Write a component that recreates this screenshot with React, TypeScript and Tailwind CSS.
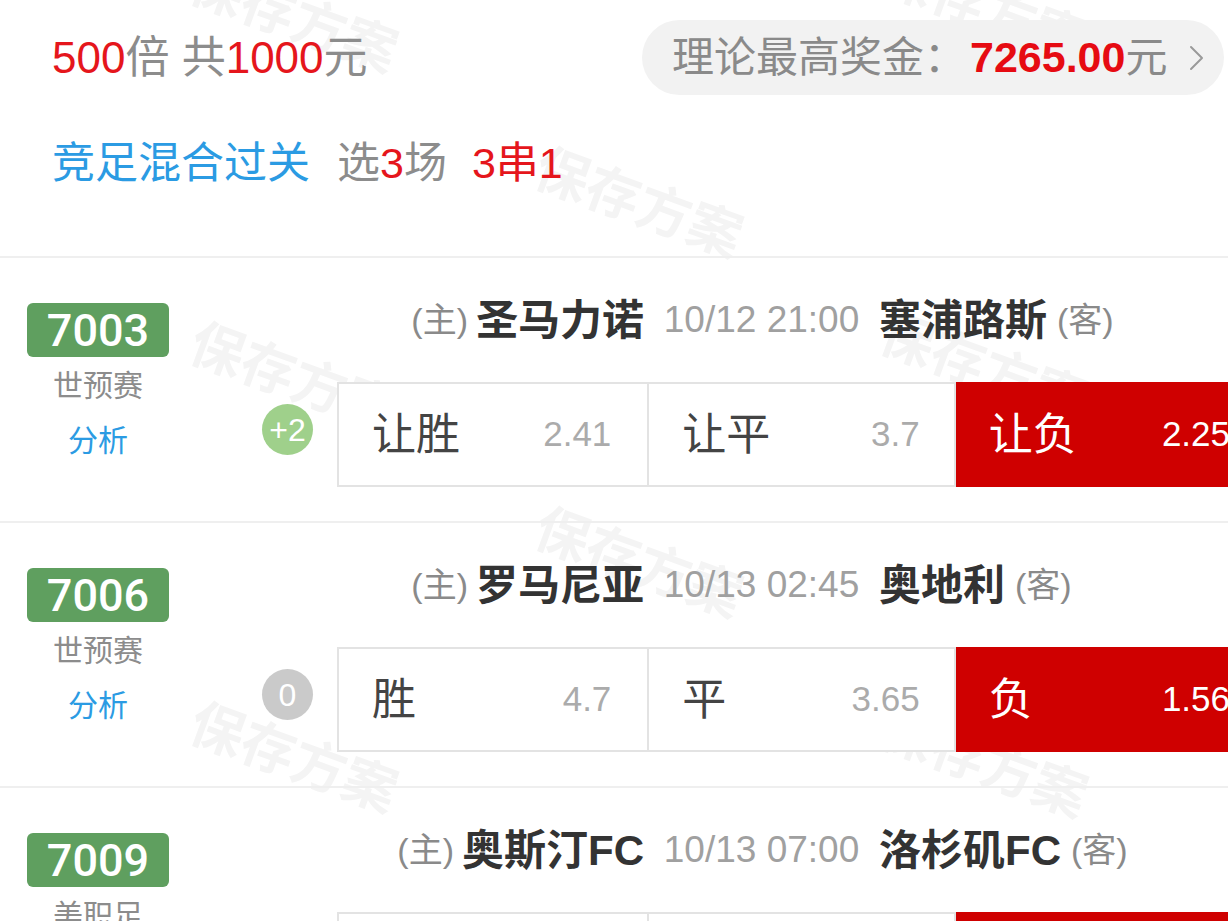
import React from 'react';

type Odd = { label: string; value: string; picked?: boolean };
type Match = {
  code: string;
  league: string;
  home: string;
  away: string;
  time: string;
  handicap: string;
  handicapColor: string;
  odds: Odd[];
};

const matches: Match[] = [
  {
    code: '7003',
    league: '世预赛',
    home: '圣马力诺',
    away: '塞浦路斯',
    time: '10/12 21:00',
    handicap: '+2',
    handicapColor: 'bg-[#9fd08b]',
    odds: [
      { label: '让胜', value: '2.41' },
      { label: '让平', value: '3.7' },
      { label: '让负', value: '2.25', picked: true },
    ],
  },
  {
    code: '7006',
    league: '世预赛',
    home: '罗马尼亚',
    away: '奥地利',
    time: '10/13 02:45',
    handicap: '0',
    handicapColor: 'bg-[#cacaca]',
    odds: [
      { label: '胜', value: '4.7' },
      { label: '平', value: '3.65' },
      { label: '负', value: '1.56', picked: true },
    ],
  },
  {
    code: '7009',
    league: '美职足',
    home: '奥斯汀FC',
    away: '洛杉矶FC',
    time: '10/13 07:00',
    handicap: '-1',
    handicapColor: 'bg-[#9fd08b]',
    odds: [
      { label: '让胜', value: '2.10' },
      { label: '让平', value: '3.40' },
      { label: '让负', value: '2.85', picked: true },
    ],
  },
];

// faint "保存方案" stamps behind the content
const marks = [
  { left: 'left-[185px]', top: 'top-[-5px]' },
  { left: 'left-[875px]', top: 'top-[-15px]' },
  { left: 'left-[530px]', top: 'top-[180px]' },
  { left: 'left-[185px]', top: 'top-[355px]' },
  { left: 'left-[875px]', top: 'top-[345px]' },
  { left: 'left-[530px]', top: 'top-[540px]' },
  { left: 'left-[185px]', top: 'top-[735px]' },
  { left: 'left-[875px]', top: 'top-[740px]' },
];

function MatchRow({ m }: { m: Match }) {
  return (
    <div className="flex h-[265px] border-b-2 border-[#efefef]">
      {/* left column */}
      <div className="w-[196px] flex flex-col items-center pt-[45px]">
        <div className="w-[142px] h-[54px] rounded-[6px] bg-[#5f9f5f] flex items-center justify-center text-white text-[45px] leading-none font-['Roboto',sans-serif] font-medium">
          {m.code}
        </div>
        <div className="mt-[9px] h-[40px] leading-[40px] text-[30px] text-[#8c8c8c]">{m.league}</div>
        <div className="mt-[15px] h-[40px] leading-[40px] text-[30px] text-[#2b9be3]">分析</div>
      </div>

      {/* right area */}
      <div className="flex-1 flex flex-col">
        <div className="mt-[40px] h-[44px] pl-[61px] flex items-center">
          <div className="flex-1 flex items-center justify-end whitespace-nowrap">
            <span className="text-[34px] text-[#8a8a8a]">(主)</span>
            <span className="ml-[8px] text-[42px] font-bold text-[#333]">{m.home}</span>
          </div>
          <div className="w-[235px] text-center text-[37px] text-[#a0a0a0] whitespace-nowrap">{m.time}</div>
          <div className="flex-1 flex items-center whitespace-nowrap">
            <span className="text-[42px] font-bold text-[#333]">{m.away}</span>
            <span className="ml-[10px] text-[34px] text-[#8a8a8a]">(客)</span>
          </div>
        </div>

        <div className="mt-[40px] flex items-start">
          <div
            className={`ml-[66px] mt-[22px] w-[51px] h-[51px] rounded-full ${m.handicapColor} flex items-center justify-center text-white text-[32px] leading-none`}
          >
            {m.handicap}
          </div>
          <div className="ml-[24px] flex-1 h-[105px] grid grid-cols-3 border-2 border-[#e3e3e3] bg-white">
            {m.odds.map((o, i) => (
              <div
                key={i}
                className={`flex items-center justify-between pl-[33px] pr-[36px] ${
                  i > 0 ? 'border-l-2 border-[#e3e3e3]' : ''
                } ${o.picked ? 'bg-[#cf0000] -my-[2px] -mr-[2px] -ml-[2px]' : ''}`}
              >
                <span className={`text-[44px] ${o.picked ? 'text-white' : 'text-[#444]'}`}>{o.label}</span>
                <span className={`text-[35px] ${o.picked ? 'text-white' : 'text-[#ababab]'}`}>{o.value}</span>
              </div>
            ))}
          </div>
        </div>
      </div>
    </div>
  );
}

export default function App() {
  return (
    <div className="w-[1228px] h-[921px] overflow-hidden bg-white font-['Liberation_Sans','Noto_Sans_CJK_SC',sans-serif]">
      <div className="relative w-[1266px]">
        {/* watermark layer */}
        <div className="absolute inset-0 pointer-events-none">
          {marks.map((p, i) => (
            <div
              key={i}
              className={`absolute ${p.left} ${p.top} w-[240px] text-[54px] font-bold text-[#f4f4f4] rotate-[20deg] whitespace-nowrap leading-none`}
            >
              保存方案
            </div>
          ))}
        </div>

        <div className="relative">
          {/* header */}
          <div className="h-[258px] border-b-2 border-[#efefef]">
            <div className="w-[1228px] pt-[20px] pl-[52px] pr-[4px] flex items-center">
              <div className="text-[44px] text-[#8c8c8c] whitespace-nowrap">
                <span className="text-[#e5161c]">500</span>倍 共<span className="text-[#e5161c]">1000</span>元
              </div>
              <div className="ml-auto w-[582px] h-[75px] rounded-full bg-[#f2f2f2] flex items-center pl-[30px] pr-[18px]">
                <span className="text-[42px] text-[#8a8a8a] whitespace-nowrap">理论最高奖金：</span>
                <span className="ml-[4px] text-[43px] font-bold text-[#e60b12]">7265.00</span>
                <span className="text-[42px] text-[#8a8a8a]">元</span>
                <svg className="ml-auto" width="18" height="30" viewBox="0 0 18 30" fill="none">
                  <polyline points="3,4 14,15 3,26" stroke="#9a9a9a" strokeWidth="2" strokeLinecap="round" strokeLinejoin="round" />
                </svg>
              </div>
            </div>
            <div className="mt-[43px] h-[50px] pl-[52px] flex items-center text-[43px] whitespace-nowrap">
              <span className="text-[#2b9be3]">竞足混合过关</span>
              <span className="ml-[27px] text-[#8c8c8c]">
                选<span className="text-[#e5161c]">3</span>场
              </span>
              <span className="ml-[25px] text-[#e5161c]">3串1</span>
            </div>
          </div>

          {matches.map((m) => (
            <MatchRow key={m.code} m={m} />
          ))}
        </div>
      </div>
    </div>
  );
}
